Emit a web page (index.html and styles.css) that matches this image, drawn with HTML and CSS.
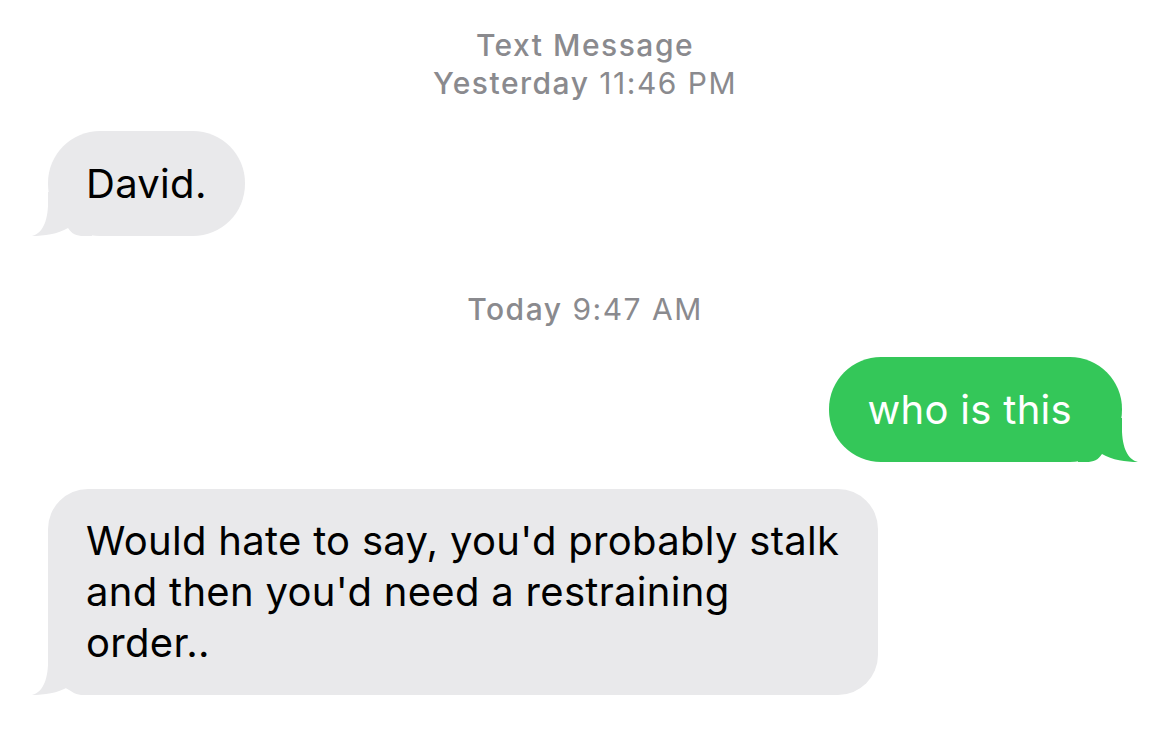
FILE: index.html
```html
<!DOCTYPE html>
<html>
<head>
<meta charset="utf-8">
<link rel="stylesheet" href="styles.css">
</head>
<body>
<main class="thread">
  <div class="stamp stamp-first">
    <div class="stamp-line strong">Text Message</div>
    <div class="stamp-line"><span class="strong">Yesterday</span> 11:46 PM</div>
  </div>

  <div class="row row-in gap-a">
    <div class="bubble in">
      David.
      <svg class="tail tail-in" viewBox="0 0 60 44" aria-hidden="true"><path d="M0,44 C8,42 15,34 16,14 L16,0 L60,0 L60,44 L52,44 C44,44 40,42 36,36 C26,42 12,44 0,44 Z"/></svg>
    </div>
  </div>

  <div class="stamp stamp-mid">
    <div class="stamp-line"><span class="strong">Today</span> 9:47 AM</div>
  </div>

  <div class="row row-out gap-a">
    <div class="bubble out">
      who is this
      <svg class="tail tail-out" viewBox="0 0 60 44" aria-hidden="true"><path d="M0,44 C8,42 15,34 16,14 L16,0 L60,0 L60,44 L52,44 C44,44 40,42 36,36 C26,42 12,44 0,44 Z"/></svg>
    </div>
  </div>

  <div class="row row-in gap-b">
    <div class="bubble in wide">
      Would hate to say, you'd probably stalk and then you'd need a restraining order..
      <svg class="tail tail-in" viewBox="0 0 60 44" aria-hidden="true"><path d="M0,44 C8,42 15,34 16,14 L16,0 L60,0 L60,44 L52,44 C44,44 40,42 36,36 C26,42 12,44 0,44 Z"/></svg>
    </div>
  </div>
</main>
</body>
</html>
```

FILE: styles.css
```css
html, body {
  margin: 0;
  padding: 0;
  background: #ffffff;
}

.thread {
  width: 1170px;
  height: 756px;
  box-sizing: border-box;
  padding: 26px 48px 0 48px;
  display: flex;
  flex-direction: column;
  font-family: Inter, "Noto Sans", "Liberation Sans", sans-serif;
  overflow: hidden;
}

.stamp {
  display: flex;
  flex-direction: column;
  align-items: center;
  color: #8a8a8e;
  font-size: 30px;
  letter-spacing: 1.5px;
  line-height: 38px;
  font-weight: 400;
}

.strong {
  font-weight: 500;
}

.stamp-mid {
  margin-top: 54px;
}

.row {
  display: flex;
}

.row-in {
  justify-content: flex-start;
}

.row-out {
  justify-content: flex-end;
}

.gap-a {
  margin-top: 29px;
}

.gap-b {
  margin-top: 27px;
}

.bubble {
  position: relative;
  isolation: isolate;
  box-sizing: border-box;
  padding: 27px 38px;
  font-size: 40px;
  letter-spacing: 0.3px;
  line-height: 51px;
  border-radius: 52px;
}

.bubble.in {
  background: #e9e9eb;
  color: #000000;
}

.bubble.out {
  background: #34c759;
  color: #ffffff;
  padding-right: 50px;
}

.bubble.wide {
  width: 830px;
  border-radius: 40px;
  padding-top: 26px;
  padding-bottom: 27px;
}

.tail {
  position: absolute;
  z-index: -1;
  bottom: 0;
  width: 60px;
  height: 44px;
}

.tail-in {
  left: -16px;
  fill: #e9e9eb;
}

.tail-out {
  right: -16px;
  fill: #34c759;
  transform: scaleX(-1);
}
```
